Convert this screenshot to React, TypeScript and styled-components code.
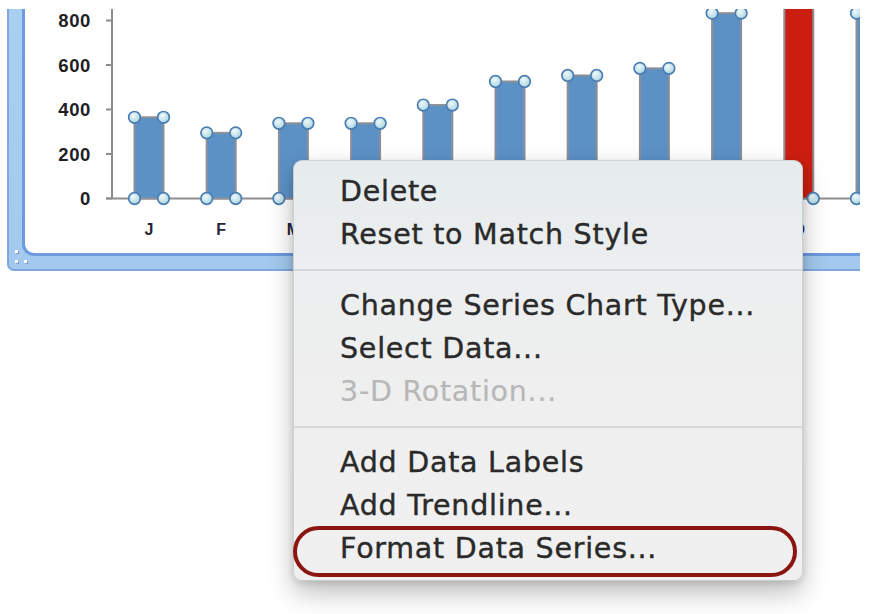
import React from "react";
import styled, { createGlobalStyle } from "styled-components";

const GlobalStyle = createGlobalStyle`
  html, body { margin: 0; padding: 0; background: #ffffff; }
  #root { width: 876px; height: 614px; }
`;

const Page = styled.div`
  position: relative;
  width: 876px;
  height: 614px;
  box-sizing: border-box;
  padding: 9px 0 0 7px;
  overflow: hidden;
  background: #ffffff;
`;

const Frame = styled.div`
  position: relative;
  width: 853px;
  height: 262px;
  box-sizing: border-box;
  padding: 0 0 13px 13px;
  background: linear-gradient(180deg, #a9cff1 0%, #a3c9ee 100%);
  border-left: 2px solid #7ea8e0;
  border-bottom: 2px solid #7ea8e0;
  border-bottom-left-radius: 7px;
  overflow: hidden;
`;

const PlotPanel = styled.div`
  height: 100%;
  box-sizing: border-box;
  background: #ffffff;
  border-left: 3px solid #6c9be1;
  border-bottom: 3px solid #6c9be1;
  border-bottom-left-radius: 12px;
  overflow: hidden;
`;

const ChartSvg = styled.svg`
  display: block;
`;

const Grip = styled.svg`
  position: absolute;
  left: 2px;
  top: 238px;
`;

const Menu = styled.div`
  position: absolute;
  left: 293px;
  top: 160px;
  width: 510px;
  box-sizing: border-box;
  padding: 9px 0 10px;
  border: 1px solid rgba(0, 0, 0, 0.13);
  border-radius: 9px;
  background: linear-gradient(180deg, #e6ecee 0%, #eceeef 25%, #efefef 60%, #f0f0f0 100%);
  box-shadow: 0 12px 26px rgba(0, 0, 0, 0.26), 0 2px 6px rgba(0, 0, 0, 0.12);
  font-family: "DejaVu Sans", "Liberation Sans", sans-serif;
  font-size: 28.5px;
  letter-spacing: 0.75px;
`;

const Item = styled.div<{ $disabled?: boolean; $circled?: boolean }>`
  position: relative;
  height: 43px;
  line-height: 43px;
  padding-left: 46px;
  white-space: nowrap;
  color: ${(p) => (p.$disabled ? "#b7b7b7" : "#2a2a2a")};
  -webkit-text-stroke: ${(p) => (p.$disabled ? "0.2px #b7b7b7" : "0.4px #2a2a2a")};

  ${(p) =>
    p.$circled
      ? `
    &::after {
      content: "";
      position: absolute;
      left: -1px;
      right: 5px;
      top: -1px;
      bottom: -7px;
      border: 4px solid #8b1611;
      border-radius: 28px;
      box-sizing: border-box;
    }
  `
      : ""}
`;

const Separator = styled.div`
  height: 2px;
  margin: 13px 0;
  background: #d6d6d6;
`;

const values = [365, 295, 338, 338, 420, 526, 553, 585, 833, 960, 833];
const months = ["J", "F", "M", "A", "M", "J", "J", "A", "S", "O"];
const zeroY = 198.5;
const yOf = (v: number) => zeroY - (v * 44.5) / 200;
const cxOf = (i: number) => 149 + i * 72.2;
const half = 14.5;

function Chart() {
  return (
    <ChartSvg width={835} height={244} viewBox="25 9 835 244">
      <defs>
        <radialGradient id="handle" cx="40%" cy="35%" r="70%">
          <stop offset="0%" stopColor="#eef9fb" />
          <stop offset="100%" stopColor="#a8d3df" />
        </radialGradient>
      </defs>
      <line x1={112} y1={0} x2={112} y2={zeroY} stroke="#8d8d8d" strokeWidth={2} />
      <line x1={106} y1={zeroY} x2={880} y2={zeroY} stroke="#8d8d8d" strokeWidth={2} />
      {[0, 200, 400, 600, 800].map((v) => (
        <g key={v}>
          <line x1={106} y1={yOf(v)} x2={112} y2={yOf(v)} stroke="#8d8d8d" strokeWidth={2} />
          <text
            x={91}
            y={yOf(v)}
            textAnchor="end"
            dominantBaseline="central"
            fontFamily="'Liberation Sans', Arial, sans-serif"
            fontWeight={700}
            fontSize={18.5}
            letterSpacing={0.6}
            fill="#1e1e24"
          >
            {v}
          </text>
        </g>
      ))}
      {months.map((m, i) => (
        <text
          key={i}
          x={cxOf(i)}
          y={229}
          textAnchor="middle"
          dominantBaseline="central"
          fontFamily="'Liberation Sans', Arial, sans-serif"
          fontWeight={700}
          fontSize={16}
          fill="#24243a"
        >
          {m}
        </text>
      ))}
      {values.map((v, i) => {
        const cx = cxOf(i);
        const top = yOf(v);
        return (
          <rect
            key={i}
            x={cx - half}
            y={top}
            width={half * 2}
            height={zeroY - top}
            fill={i === 9 ? "#cc1e10" : "#5c91c6"}
            stroke="#8c9096"
            strokeWidth={2}
          />
        );
      })}
      {values.map((v, i) => {
        const cx = cxOf(i);
        const top = yOf(v);
        const pts: [number, number][] = [
          [cx - half, top],
          [cx + half, top],
          [cx - half, zeroY],
          [cx + half, zeroY],
        ];
        return pts.map(([x, y], k) => (
          <circle
            key={`${i}-${k}`}
            cx={x}
            cy={y}
            r={5.8}
            fill="url(#handle)"
            stroke="#4a7db3"
            strokeWidth={1.7}
          />
        ));
      })}
    </ChartSvg>
  );
}

export default function App() {
  return (
    <>
      <GlobalStyle />
      <Page>
        <Frame>
          <PlotPanel>
            <Chart />
          </PlotPanel>
          <Grip width={18} height={18} viewBox="0 0 18 18">
            {[
              [6, 5],
              [6, 15],
              [15, 15],
            ].map(([x, y], i) => (
              <g key={i}>
                <rect x={x - 1} y={y - 1} width={3} height={3} fill="#7d9cc4" />
                <rect x={x - 2} y={y - 2} width={3} height={3} fill="#ffffff" />
              </g>
            ))}
          </Grip>
        </Frame>
        <Menu>
          <Item>Delete</Item>
          <Item>Reset to Match Style</Item>
          <Separator />
          <Item>Change Series Chart Type...</Item>
          <Item>Select Data...</Item>
          <Item $disabled>3-D Rotation...</Item>
          <Separator />
          <Item>Add Data Labels</Item>
          <Item>Add Trendline...</Item>
          <Item $circled>Format Data Series...</Item>
        </Menu>
      </Page>
    </>
  );
}
